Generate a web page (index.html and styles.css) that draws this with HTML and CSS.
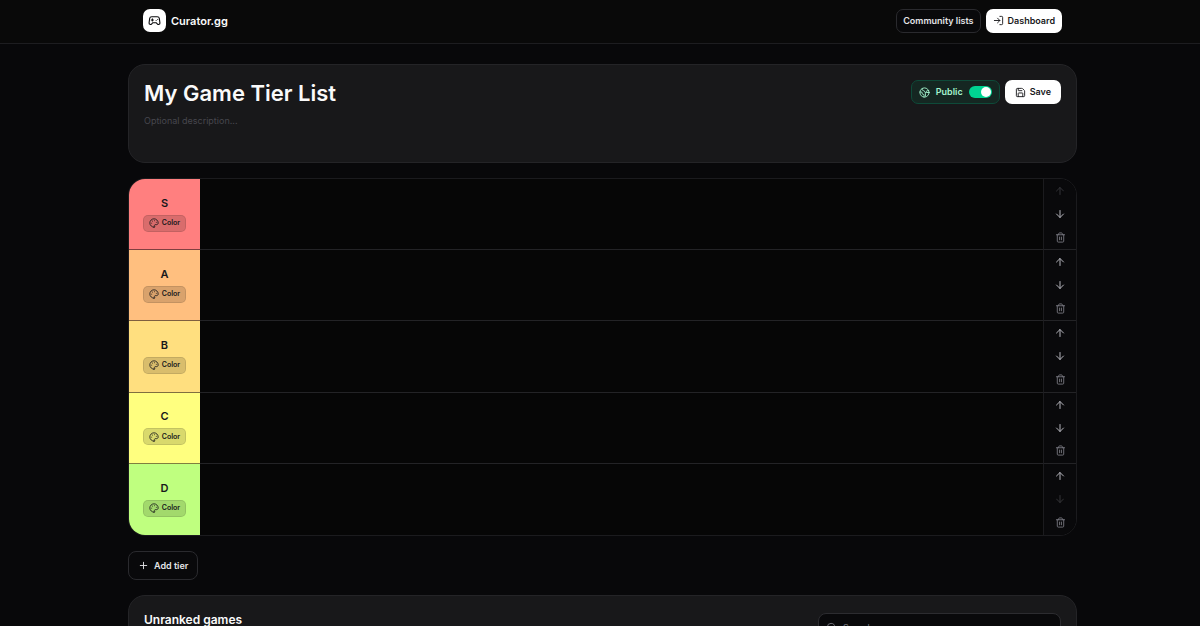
FILE: index.html
```html
<!DOCTYPE html>
<html lang="en">
<head>
    <meta charset="UTF-8">
    <meta name="viewport" content="width=device-width, initial-scale=1.0">
    <title>My Game Tier List - Curator.gg</title>
    <link rel="stylesheet" href="styles.css">
</head>
<body>
    <!-- Icon set -->
    <svg class="sprite" aria-hidden="true">
        <symbol id="gamepad" viewBox="0 0 24 24">
            <path d="M7 5h10a4 4 0 0 1 4 3.500l1 8a2.600 2.600 0 0 1-4.500 2L15 16H9l-2.500 2.500a2.600 2.600 0 0 1-4.500-2l1-8A4 4 0 0 1 7 5z"/>
            <path d="M6 11h4M8 9v4M15 12h.01M18 10h.01"/>
        </symbol>
        <symbol id="login" viewBox="0 0 24 24">
            <path d="M15 3h4a2 2 0 0 1 2 2v14a2 2 0 0 1-2 2h-4M10 17l5-5-5-5M15 12H3"/>
        </symbol>
        <symbol id="globe" viewBox="0 0 24 24">
            <circle cx="12" cy="12" r="10"/>
            <path d="M21.500 12H16a2 2 0 0 0-2 2v5.500M7 3.500V5a3 3 0 0 0 3 3 2 2 0 0 1 2 2c0 1.100.9 2 2 2a2 2 0 0 0 2-2c0-1.100.9-2 2-2h3.200M11 22v-4a2 2 0 0 0-2-2 2 2 0 0 1-2-2v-1a2 2 0 0 0-2-2H2"/>
        </symbol>
        <symbol id="save" viewBox="0 0 24 24">
            <path d="M15.200 3a2 2 0 0 1 1.400.6l3.800 3.800a2 2 0 0 1 .6 1.400V19a2 2 0 0 1-2 2H5a2 2 0 0 1-2-2V5a2 2 0 0 1 2-2zM17 21v-7a1 1 0 0 0-1-1H8a1 1 0 0 0-1 1v7M7 3v4a1 1 0 0 0 1 1h7"/>
        </symbol>
        <symbol id="palette" viewBox="0 0 24 24">
            <path d="M12 22a10 10 0 1 1 10-10c0 3-2.400 4-4.500 4H15a2 2 0 0 0-1.500 3.300c1 1.200.2 2.700-1.500 2.700z"/>
            <path d="M13.500 6.500h.01M17.500 10.500h.01M8.500 7.500h.01M6.500 12.500h.01"/>
        </symbol>
        <symbol id="up" viewBox="0 0 24 24">
            <path d="M5 12l7-7 7 7M12 19V5"/>
        </symbol>
        <symbol id="down" viewBox="0 0 24 24">
            <path d="M19 12l-7 7-7-7M12 5v14"/>
        </symbol>
        <symbol id="trash" viewBox="0 0 24 24">
            <path d="M3 6h18M19 6v14a2 2 0 0 1-2 2H7a2 2 0 0 1-2-2V6M8 6V4a2 2 0 0 1 2-2h4a2 2 0 0 1 2 2v2M10 11v6M14 11v6"/>
        </symbol>
        <symbol id="plus" viewBox="0 0 24 24">
            <path d="M5 12h14M12 5v14"/>
        </symbol>
        <symbol id="search" viewBox="0 0 24 24">
            <circle cx="11" cy="11" r="8"/>
            <path d="M21 21l-4.300-4.300"/>
        </symbol>
    </svg>

    <header class="topbar">
        <a class="brand" href="#">
            <span class="brand-mark"><svg class="icon icon-lg"><use href="#gamepad"/></svg></span>
            Curator.gg
        </a>
        <nav class="topnav">
            <a class="btn btn-outline" href="#">Community lists</a>
            <a class="btn btn-light" href="#"><svg class="icon"><use href="#login"/></svg>Dashboard</a>
        </nav>
    </header>

    <main>
        <!-- List details -->
        <section class="card details">
            <div class="details-text">
                <input class="title" type="text" value="My Game Tier List" aria-label="List title">
                <textarea class="description" placeholder="Optional description..." aria-label="Description"></textarea>
            </div>
            <div class="details-actions">
                <label class="public">
                    <svg class="icon"><use href="#globe"/></svg>
                    Public
                    <input class="switch" type="checkbox" checked>
                </label>
                <button class="btn btn-light btn-save"><svg class="icon"><use href="#save"/></svg>Save</button>
            </div>
        </section>

        <!-- Tiers -->
        <section class="tiers">
            <div class="tier">
                <div class="tier-label tier-s">
                    <span class="tier-name">S</span>
                    <button class="color-btn"><svg class="icon"><use href="#palette"/></svg>Color</button>
                </div>
                <div class="tier-games"></div>
                <div class="tier-tools">
                    <button aria-label="Move up" disabled><svg class="icon"><use href="#up"/></svg></button>
                    <button aria-label="Move down"><svg class="icon"><use href="#down"/></svg></button>
                    <button class="delete" aria-label="Delete tier"><svg class="icon"><use href="#trash"/></svg></button>
                </div>
            </div>
            <div class="tier">
                <div class="tier-label tier-a">
                    <span class="tier-name">A</span>
                    <button class="color-btn"><svg class="icon"><use href="#palette"/></svg>Color</button>
                </div>
                <div class="tier-games"></div>
                <div class="tier-tools">
                    <button aria-label="Move up"><svg class="icon"><use href="#up"/></svg></button>
                    <button aria-label="Move down"><svg class="icon"><use href="#down"/></svg></button>
                    <button class="delete" aria-label="Delete tier"><svg class="icon"><use href="#trash"/></svg></button>
                </div>
            </div>
            <div class="tier">
                <div class="tier-label tier-b">
                    <span class="tier-name">B</span>
                    <button class="color-btn"><svg class="icon"><use href="#palette"/></svg>Color</button>
                </div>
                <div class="tier-games"></div>
                <div class="tier-tools">
                    <button aria-label="Move up"><svg class="icon"><use href="#up"/></svg></button>
                    <button aria-label="Move down"><svg class="icon"><use href="#down"/></svg></button>
                    <button class="delete" aria-label="Delete tier"><svg class="icon"><use href="#trash"/></svg></button>
                </div>
            </div>
            <div class="tier">
                <div class="tier-label tier-c">
                    <span class="tier-name">C</span>
                    <button class="color-btn"><svg class="icon"><use href="#palette"/></svg>Color</button>
                </div>
                <div class="tier-games"></div>
                <div class="tier-tools">
                    <button aria-label="Move up"><svg class="icon"><use href="#up"/></svg></button>
                    <button aria-label="Move down"><svg class="icon"><use href="#down"/></svg></button>
                    <button class="delete" aria-label="Delete tier"><svg class="icon"><use href="#trash"/></svg></button>
                </div>
            </div>
            <div class="tier">
                <div class="tier-label tier-d">
                    <span class="tier-name">D</span>
                    <button class="color-btn"><svg class="icon"><use href="#palette"/></svg>Color</button>
                </div>
                <div class="tier-games"></div>
                <div class="tier-tools">
                    <button aria-label="Move up"><svg class="icon"><use href="#up"/></svg></button>
                    <button aria-label="Move down" disabled><svg class="icon"><use href="#down"/></svg></button>
                    <button class="delete" aria-label="Delete tier"><svg class="icon"><use href="#trash"/></svg></button>
                </div>
            </div>
        </section>

        <button class="btn btn-outline btn-add"><svg class="icon"><use href="#plus"/></svg>Add tier</button>

        <!-- Unranked games -->
        <section class="card unranked">
            <h2>Unranked games</h2>
            <label class="search">
                <svg class="icon"><use href="#search"/></svg>
                <input type="text" placeholder="Search games..." aria-label="Search games">
            </label>
        </section>
    </main>
</body>
</html>
```
FILE: styles.css
```css
* {
    box-sizing: border-box;
}
body {
    display: flex;
    flex-direction: column;
    height: 100vh;
    margin: 0;
    background-color: #08080a;
    color: #fafafa;
    font-family: Inter, "Liberation Sans", sans-serif;
    font-size: 9px;
    line-height: 12px;
}
button, input, textarea {
    margin: 0;
    padding: 0;
    border: none;
    outline: none;
    background: none;
    color: inherit;
    font: inherit;
}
button {
    cursor: pointer;
}
a {
    color: inherit;
    text-decoration: none;
}
.sprite {
    display: none;
}
.icon {
    flex: none;
    width: 11px;
    height: 11px;
    fill: none;
    stroke: currentColor;
    stroke-width: 2;
    stroke-linecap: round;
    stroke-linejoin: round;
}
.icon-lg {
    width: 13px;
    height: 13px;
}

/* Top bar */
.topbar {
    display: flex;
    flex: none;
    align-items: center;
    justify-content: space-between;
    height: 44px;
    padding: 0 138px 2px 143px;
    border-bottom: 1px solid #1d1d20;
    background-color: #090909;
}
.brand {
    display: flex;
    align-items: center;
    gap: 5px;
    font-size: 11px;
    font-weight: 600;
}
.brand-mark {
    display: flex;
    align-items: center;
    justify-content: center;
    width: 23px;
    height: 23px;
    border-radius: 7px;
    background-color: #ffffff;
    color: #09090b;
}
.topnav {
    display: flex;
    gap: 5px;
}
.btn {
    display: flex;
    align-items: center;
    justify-content: center;
    gap: 4px;
    height: 24px;
    padding: 0 6px;
    border: 1px solid transparent;
    border-radius: 7px;
    font-weight: 600;
}
.btn-outline {
    border-color: #2a2a2e;
    background-color: #09090b;
    color: #e4e4e7;
}
.btn-light {
    background-color: #ffffff;
    color: #18181b;
}

main {
    flex: 1;
    min-height: 0;
    padding: 20px 123px 24px 128px;
    overflow-y: auto;
    scrollbar-width: none;
}
.card {
    display: flex;
    justify-content: space-between;
    border: 1px solid #242427;
    border-radius: 17px;
    background-color: #18181a;
}

/* List details */
.details {
    padding: 15px;
}
.details-text {
    display: flex;
    flex: 1;
    flex-direction: column;
    gap: 9px;
}
.title {
    width: 100%;
    height: 26px;
    font-size: 22px;
    font-weight: 600;
}
.description {
    height: 32px;
    resize: none;
}
.description::placeholder {
    color: #47474e;
}
.details-actions {
    display: flex;
    align-items: flex-start;
    gap: 5px;
}
.public {
    display: flex;
    align-items: center;
    gap: 6px;
    height: 24px;
    padding: 0 7px;
    border: 1px solid #0e4a39;
    border-radius: 7px;
    background-color: #152722;
    color: #a4f4cf;
    font-weight: 600;
}
.switch {
    display: flex;
    align-items: center;
    width: 23px;
    height: 12px;
    padding: 0 1px;
    border-radius: 6px;
    background-color: #3f3f46;
    appearance: none;
}
.switch::before {
    width: 10px;
    height: 10px;
    border-radius: 50%;
    background-color: #ffffff;
    content: "";
}
.switch:checked {
    justify-content: flex-end;
    background-color: #00d492;
}
.btn-save {
    padding: 0 9px;
}

/* Tiers */
.tiers {
    display: grid;
    grid-auto-rows: 1fr;
    min-height: 358px;
    margin: 15px 0;
    border: 1px solid #1b1b1e;
    border-radius: 17px;
    background-color: #060606;
    overflow: hidden;
}
.tier {
    display: grid;
    grid-template-columns: 71px 1fr 33px;
}
.tier-label {
    display: flex;
    flex-direction: column;
    align-items: center;
    justify-content: center;
    gap: 6px;
    border-bottom: 1px solid rgba(0, 0, 0, 0.5);
    color: #18181b;
}
.tier-name {
    font-size: 11px;
    font-weight: 600;
}
.tier-s { background-color: #ff7f7f; }
.tier-a { background-color: #ffbf7f; }
.tier-b { background-color: #ffdf7f; }
.tier-c { background-color: #ffff7f; }
.tier-d { background-color: #bfff7f; }
.tier-games,
.tier-tools {
    border-bottom: 1px solid #232326;
}
.tier:last-child > div {
    border-bottom: none;
}
.color-btn {
    display: flex;
    align-items: center;
    gap: 3px;
    height: 17px;
    padding: 0 5px;
    border: 1px solid rgba(0, 0, 0, 0.1);
    border-radius: 5px;
    background-color: rgba(0, 0, 0, 0.15);
    font-size: 7px;
    font-weight: 600;
}
.color-btn .icon {
    width: 10px;
    height: 10px;
}
.tier-tools {
    display: flex;
    flex-direction: column;
    align-items: center;
    justify-content: center;
    gap: 3px;
    border-left: 1px solid #1b1b1e;
    background-color: #09090b;
    color: #b4b4bb;
}
.tier-tools button {
    display: flex;
    align-items: center;
    justify-content: center;
    width: 20px;
    height: 20px;
}
.tier-tools .icon {
    width: 12px;
    height: 12px;
}
.tier-tools button:disabled {
    opacity: 0.25;
}
.tier-tools .delete {
    color: #77777f;
}
.tier-tools .delete .icon {
    width: 11px;
    height: 11px;
}

.btn-add {
    gap: 5px;
    height: 29px;
    padding: 0 9px;
    border-radius: 8px;
}

/* Unranked games */
.unranked {
    align-items: flex-start;
    min-height: 120px;
    margin-top: 15px;
    padding: 17px 15px;
}
.unranked h2 {
    margin: 0;
    font-size: 12px;
    font-weight: 600;
    line-height: 14px;
}
.search {
    display: flex;
    align-items: center;
    gap: 6px;
    width: 243px;
    height: 29px;
    padding: 0 7px;
    border: 1px solid #2c2c30;
    border-radius: 8px;
    background-color: #09090b;
    color: #77777f;
}
.search input {
    flex: 1;
}
.search input::placeholder {
    color: #77777f;
}
```
